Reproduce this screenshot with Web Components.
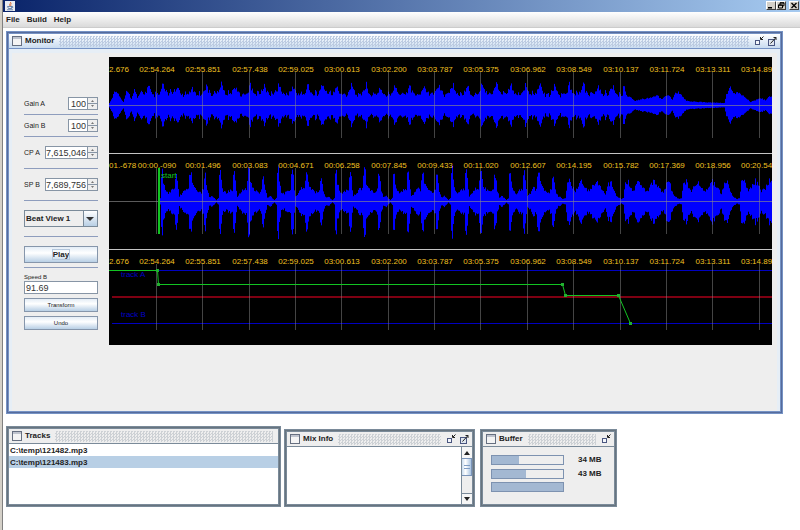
<!DOCTYPE html>
<html lang="en">
<head>
<meta charset="utf-8">
<title>Mixer</title>
<style>
html,body{margin:0;min-height:100%;background:#fff}
body{font:8px/12px "Liberation Sans",Arial,sans-serif;color:#222;display:flex;min-height:100vh}
mixer-app{flex:1}
</style>
</head>
<body>
<mixer-app></mixer-app>
<script>
const define = (name, css, html, setup) => {
  const tpl = document.createElement('template');
  tpl.innerHTML = `<style>*{box-sizing:border-box}button,input,select{font:inherit;color:inherit;margin:0;padding:0;border-radius:0}${css}</style>${html}`;
  customElements.define(name, class extends HTMLElement {
    connectedCallback() {
      if (this.shadowRoot) return;
      this.attachShadow({mode: 'open'}).append(tpl.content.cloneNode(true));
      if (setup) setup(this, this.shadowRoot);
    }
  });
};

define('title-bar', `
:host{display:flex;align-items:center;justify-content:space-between;height:12px;padding:0 1px 1px 2px;background:linear-gradient(90deg,#0a246a,#a6caf0)}
.ctl{display:flex}
button{width:10px;height:9px;display:grid;place-items:center;background:#d4d0c8;border:1px solid;border-color:#fff #404040 #404040 #fff;color:#000}
button:last-child{margin-left:3px}
svg{display:block}`,
`<svg width="10" height="10" viewBox="0 0 20 20" role="img" aria-label="Java"><rect width="20" height="20" fill="#e8ecf2"/><path d="M11 2c2 3-4 4-1 8M13 5c-2 2-2 3-1 5" fill="none" stroke="#d9662b" stroke-width="1.8"/><path d="M5 11h9l-1 4H7zM14 11c3 0 2 3-1 3M4 17.500h12" fill="none" stroke="#4c6f9c" stroke-width="1.6"/></svg>
<div class="ctl">
<button aria-label="Minimize"><svg width="8" height="7"><path d="M1 5h4v1.500H1z"/></svg></button>
<button aria-label="Restore"><svg width="8" height="7" fill="none" stroke="#000"><path d="M3 3V.8h4v3H5.500M1.500 3h4v3h-4zM1 3.200h5M3 1h4"/></svg></button>
<button aria-label="Close"><svg width="8" height="7" stroke="#000" stroke-width="1.300"><path d="M1.500 1l5 5M6.500 1l-5 5"/></svg></button>
</div>`);

define('menu-bar', `
:host{display:flex;gap:7px;height:16px;padding:0 3px;background:linear-gradient(#fff,#dadada);border-bottom:1px solid #ccc}
button{border:0;background:none;font-weight:bold}`,
`<button>File</button><button>Build</button><button>Help</button>`);

define('internal-frame', `
:host{--edge:#7a8a99;--dark:#67747f;--bar:#eee;--dot:#cdd1d5;display:flex;flex-direction:column;border:3px solid var(--edge);outline:1px solid var(--dark);outline-offset:-2px;background:#eee}
:host([active]){--edge:#7592c4;--dark:#566b9c;--bar:linear-gradient(#fff,#c9dcf0);--dot:#bccbe1}
header{display:flex;align-items:center;gap:3px;height:15px;padding:0 3px;background:var(--bar);border-bottom:1px solid var(--edge);flex:none}
b{color:#222;white-space:nowrap}
i{flex:1;height:11px;margin:0 2px;background:conic-gradient(var(--dot) 25%,#0000 0 50%,var(--dot) 0 75%,#0000 0) 0 0/3px 3px}
button{display:block;border:0;background:none;width:10px;height:11px}
svg{display:block}
[hidden]{display:none}
.body{flex:1;display:flex;flex-direction:column;min-height:0}`,
`<header><svg width="10" height="10"><rect x=".5" y=".5" width="9" height="9" fill="#f4f4f4" stroke="#666f80"/><path d="M1 2h8" stroke="#8a93a8"/></svg><b></b><i></i>
<button class="min" aria-label="Iconify"><svg width="10" height="11"><rect x="1.500" y="4.500" width="4" height="4" fill="#f4f7fb" stroke="#4a5680"/><path d="M9.500.5L7 3M6.500 1v2.500H9" stroke="#222" fill="none"/></svg></button>
<button class="max" aria-label="Maximize"><svg width="10" height="11"><rect x="1.500" y="3.500" width="6" height="6" fill="#dfe6ee" stroke="#4a5680"/><path d="M3.500 7.500L9 1.500M6.500 1.500H9V4" stroke="#222" fill="none"/></svg></button></header>
<div class="body"><slot></slot></div>`,
(el, r) => {
  r.querySelector('b').textContent = el.getAttribute('label');
  const c = el.getAttribute('controls') || '';
  r.querySelector('.min').hidden = !c.includes('min');
  r.querySelector('.max').hidden = !c.includes('max');
});

define('control-group', `
:host{display:block;padding:var(--gap,4px) 0;border-bottom:1px solid #8e9dbd}
:host([loose]){--gap:9px}
:host([low]){padding-top:9px}`, `<slot></slot>`);

define('spin-field', `
:host{display:flex;justify-content:space-between;align-items:center;font-size:7px}
.box{display:flex;height:13px;border:1px solid #8795a5;background:#fff;font-size:9px}
input{border:0;outline:0;background:none;text-align:right;color:#333;padding-right:1px}
.arrows{display:flex;flex-direction:column;width:10px;border-left:1px solid #8795a5}
button{flex:1;border:0;background:#eee;display:grid;place-items:center}
button+button{border-top:1px solid #8795a5}
svg{display:block}`,
`<label for="v"></label><div class="box"><input id="v"><span class="arrows"><button aria-label="Increase"><svg width="5" height="3"><path d="M1 3l1.500-2L4 3z" fill="#777"/></svg></button><button aria-label="Decrease"><svg width="5" height="3"><path d="M1 0l1.500 2L4 0z" fill="#777"/></svg></button></span></div>`,
(el, r) => {
  const v = el.getAttribute('value'), input = r.querySelector('input');
  r.querySelector('label').textContent = el.getAttribute('label');
  input.value = v;
  input.style.width = v.length > 4 ? '41px' : '18px';
});

define('mix-controls', `
:host{display:block;width:74px;flex:none;padding-top:36px}
.combo{display:grid;height:17px;border:1px solid #7a8a99;background:linear-gradient(90deg,#eee 58px,#7a8a99 0 59px,#0000 0),linear-gradient(#fff,#b8cfe5)}
select,.combo svg{grid-area:1/1}
select{appearance:none;border:0;outline:0;background:none;width:100%;padding-left:1px;font-weight:bold}
.combo svg{justify-self:end;align-self:center;margin-right:2px;pointer-events:none}
button{display:block;width:100%;height:14px;border:1px solid #8696ab;background:linear-gradient(#e4edf6,#fff 40%,#b8cfe5);font-size:6px;line-height:8px}
.play{height:17px;font-size:8px;font-weight:bold}
.play span{outline:1px solid #b5c7dc}
.speed{display:grid;gap:4px;padding-top:5px}
.field{display:grid;font-size:6px;line-height:8px}
.field input{height:13px;width:100%;border:1px solid #8795a5;background:#fff;font-size:9px;color:#333;padding-left:1px;outline:0}`,
`<control-group><spin-field label="Gain A" value="100"></spin-field></control-group>
<control-group><spin-field label="Gain B" value="100"></spin-field></control-group>
<control-group loose><spin-field label="CP A" value="7,615,046"></spin-field></control-group>
<control-group loose><spin-field label="SP B" value="7,689,756"></spin-field></control-group>
<control-group loose><div class="combo"><select aria-label="View"><option>Beat View 1</option></select><svg width="10" height="6"><path d="M1 1h8L5 5z" fill="#333"/></svg></div></control-group>
<control-group low><button class="play"><span>Play</span></button></control-group>
<div class="speed"><div class="field"><label for="s">Speed B</label><input id="s" value="91.69"></div>
<button>Transform</button><button>Undo</button></div>`);

const STEP = 46.35, FIRST = 47, BEAT = 14.5;
const noise = n => { const s = Math.sin(n * 127.1 + 3.7) * 43758.5453; return s - Math.floor(s); };
const ramp = (pts, x) => {
  for (let i = 1; i < pts.length; i++) if (x <= pts[i][0]) {
    const [a, b] = [pts[i - 1], pts[i]];
    return a[1] + (b[1] - a[1]) * (x - a[0]) / (b[0] - a[0]);
  }
  return pts[pts.length - 1][1];
};
const intro = [[0,2],[3,7],[5,15],[8,13],[12,5],[14,3],[17,14],[20,10],[22,6],[25,15],[28,8],[32,13],[34,15]];
const outro = [[513,15],[515,20],[517,10],[522,7],[526,4],[533,6],[540,7],[547,10],[552,6],[559,10],[563,5],[566,12],[569,13],[573,9],[577,4],[590,3],[613,2],[615,2],[617,10],[621,18],[624,12],[630,12],[636,8],[641,3],[644,4],[650,7],[656,5],[661,9],[900,7]];
const beatShape = [[0,21],[1,23],[2.5,16],[5,13],[6.5,10],[8,15],[10,11],[12,15],[13.5,16],[14.5,21]];
const steady = x => {
  if (x < 34) return ramp(intro, x) * (.9 + .2 * noise(x));
  if (x > 513) return ramp(outro, x) * (.9 + .2 * noise(x));
  const t = x - 53 + BEAT * 4, k = Math.floor(t / BEAT);
  return ramp(beatShape, t % BEAT) * (.76 + .3 * noise(x)) * (.9 + .16 * noise(k + 900));
};
const bar = [[0,30],[1,33],[2,20],[4,10],[7,8],[10,11],[13,12],[14,27],[15.5,30],[17,12],[18,5],[21,8],[24,13],[27,12],[28,25],[29.5,35],[31,20],[33,14],[37,10],[40,9],[42,13],[43,25],[44,28],[46,11],[48,4],[51,5],[55,1],[57,3],[58,30]];
const fade = [[0,19],[3,21],[5,14],[8,11],[11,17],[14,21],[17,16],[20,10],[24,13],[28,21],[32,17],[35,12],[38,8],[41,17],[44,21],[46,12],[49,5],[54,2],[56,3],[58,19]];
const pulsing = x => {
  if (x < 51) return 0;
  const t = (x - 52 + 58) % 58, late = x > 447;
  return ramp(late ? fade : bar, t) * (.8 + .3 * noise(x + 50));
};
const wavePath = (fn, down) => {
  let d = '';
  for (let x = 0; x < 900; x++) {
    const a = fn(x);
    if (a > 0) d += `M${x}.5 ${(48 - a).toFixed(1)}V${(48.5 + a * down).toFixed(1)}`;
  }
  return d;
};
/* The view is scrolled mid-tick: the first and last stamps show only the digits that fit. */
const lines = {
  a: ['2.676','02:54.264','02:55.851','02:57.438','02:59.025','03:00.613','03:02.200','03:03.787','03:05.375','03:06.962','03:08.549','03:10.137','03:11.724','03:13.311','03:14.89'],
  b: ['01.-678','00:00.-090','00:01.496','00:03.083','00:04.671','00:06.258','00:07.845','00:09.433','00:11.020','00:12.607','00:14.195','00:15.782','00:17.369','00:18.956','00:20.54']
};

define('time-track', `
:host{display:block;height:96px;background:#000;border-top:1px solid #c4c4c4}
:host(:first-of-type){border-color:#000}
svg{display:block;width:100%;height:95px;overflow:hidden}
text{font:8px "Liberation Sans",Arial,sans-serif;fill:#f0c020}
.grid{stroke:#888;stroke-opacity:.5}
.wave{stroke:#00f;fill:none}
.mid{stroke:#8c8c8c;stroke-opacity:.65}
.cue{stroke:#12c422;fill:none}
.lane{stroke:#0000c0}`,
`<svg></svg>`,
(el, r) => {
  const kind = el.getAttribute('kind'), tag = lines[kind === 'b' ? 'b' : 'a'];
  let s = '<g transform="translate(0 -1)">';
  if (kind !== 'mix') s += `<path class="wave" d="${kind === 'a' ? wavePath(steady, .98) : wavePath(pulsing, 1.05)}"/><path class="mid" d="M0 48.5H2000"/>`;
  else s += `<path class="lane" d="M3 21.5H2000"/><path class="lane" d="M3 74.5H2000"/><path d="M3 48H2000" stroke="#a80018" stroke-width="1.5"/>
    <text x="12" y="28" style="fill:#0000c8">track A</text><text x="12" y="68" style="fill:#0000c8">track B</text>`;
  tag.forEach((t, i) => {
    const x = Math.round(FIRST + STEP * (i - 1)), last = i === tag.length - 1;
    if (i) s += `<path class="grid" d="M${x}.5 15V81"/>`;
    if (!i) s += `<text x="0" y="15">${t}</text>`;
    else if (last) s += `<text x="${x - 18}" y="15">${t}</text>`;
    else s += `<text x="${x + 1}" y="15" text-anchor="middle">${t}</text>`;
  });
  if (kind === 'b') s += '<path class="cue" stroke-width="2" d="M50 15V81"/><text x="52" y="25" style="fill:#12c422">start</text>';
  if (kind === 'mix') {
    const pts = [[48,21],[49,35],[453,35],[456,46],[509,46],[521,74]];
    s += `<path class="cue" d="M0 21.5${pts.map(([x, y]) => `L${x}.5 ${y}.5`).join('')}"/>`;
    s += pts.map(([x, y]) => `<rect x="${x - 1}" y="${y - 1}" width="3" height="3" fill="#22b030"/>`).join('');
  }
  r.querySelector('svg').innerHTML = s + '</g>';
});

define('monitor-view', `
:host{display:flex;gap:11px;flex:1;min-height:362px;border:3px solid #e6eef6;border-top-width:4px;border-bottom:0;padding:4px 5px 0 12px}
.tracks{flex:1;min-width:0}`,
`<mix-controls></mix-controls><div class="tracks"><time-track kind="a"></time-track><time-track kind="b"></time-track><time-track kind="mix"></time-track></div>`);

define('track-list', `
:host{display:block;flex:1;background:#fff}
ul{list-style:none;margin:0;padding:0}
li{height:12px;padding:1px 1px 0;font-weight:bold;white-space:nowrap}
[aria-selected=true]{background:#b8cfe5}`,
`<ul role="listbox" aria-label="Tracks"><li role="option">C:\\temp\\121482.mp3</li><li role="option" aria-selected="true">C:\\temp\\121483.mp3</li></ul>`);

define('mix-info', `
:host{display:flex;flex:1;background:#fff}
textarea{flex:1;min-width:0;height:100%;border:0;outline:0;resize:none;padding:0}
.bar{width:11px;display:flex;flex-direction:column;border-left:1px solid #7a8a99;background:#eee}
button{height:11px;border:0;background:#f6f6f6;display:grid;place-items:center}
.thumb{height:18px;border:1px solid #7a94ba;border-left:0;display:grid;place-items:center;background:linear-gradient(90deg,#c9dcef,#fff 40%,#a9c4e2)}
.thumb svg,button svg{display:block}
.rest{flex:1}
.bar button:last-child{border-top:1px solid #7a8a99}`,
`<textarea aria-label="Mix Info"></textarea><div class="bar"><button aria-label="Scroll up"><svg width="6" height="4"><path d="M0 4l3-4 3 4z" fill="#222"/></svg></button><div class="thumb"><svg width="6" height="4"><path d="M0 .5h6M0 3.500h6" stroke="#7e9cc4"/></svg></div><div class="rest"></div><button aria-label="Scroll down"><svg width="6" height="4"><path d="M0 0h6L3 4z" fill="#222"/></svg></button></div>`);

define('memory-meter', `
:host{display:grid;grid-template-columns:73px 1fr;column-gap:14px;align-items:center;font-weight:bold}
progress{appearance:none;display:block;width:100%;height:10px;border:1px solid #7d92b0;background:#eee}
progress::-webkit-progress-bar{background:#eee}
progress::-webkit-progress-value{background:#a3b8d2}
label{white-space:nowrap}`,
`<progress id="p" max="100"></progress><label for="p"></label>`,
(el, r) => {
  r.querySelector('progress').value = el.getAttribute('value');
  r.querySelector('label').textContent = el.getAttribute('label') || '';
});

define('buffer-view', `
:host{display:grid;gap:2px;align-content:start;padding:7px 8px}`,
`<memory-meter value="38" label="34 MB"></memory-meter><memory-meter value="48" label="43 MB"></memory-meter><memory-meter value="100"></memory-meter>`);

define('mixer-app', `
:host{display:flex;flex-direction:column;background:#fff;border-left:2px solid #d4d0c8;box-shadow:inset 1px 0 #808080;padding-left:1px}
.desk{flex:1;padding:3px 17px 0 3px;display:flex;flex-direction:column;gap:12px}
.row{display:flex;align-items:flex-end}
.tracks{width:275px;height:81px;margin-right:3px}
.mix{width:191px;height:78px;margin-right:5px}
.buffer{width:137px;height:78px}`,
`<title-bar></title-bar><menu-bar></menu-bar>
<div class="desk"><internal-frame active label="Monitor" controls="min max"><monitor-view></monitor-view></internal-frame>
<div class="row"><internal-frame class="tracks" label="Tracks"><track-list></track-list></internal-frame>
<internal-frame class="mix" label="Mix Info" controls="min max"><mix-info></mix-info></internal-frame>
<internal-frame class="buffer" label="Buffer" controls="min"><buffer-view></buffer-view></internal-frame></div></div>`);
</script>
</body>
</html>
